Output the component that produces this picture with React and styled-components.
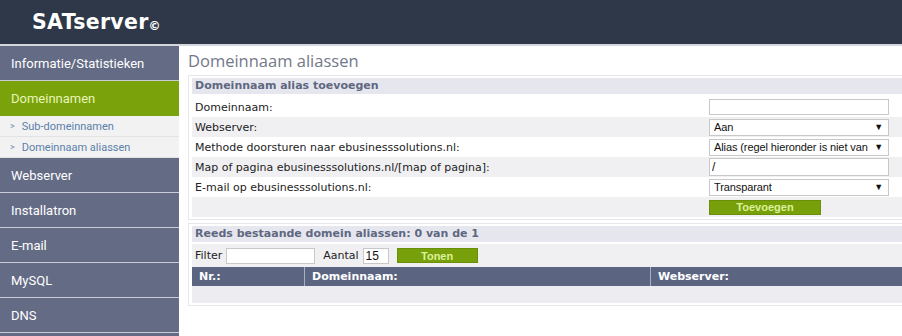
import React from 'react';
import styled, { createGlobalStyle } from 'styled-components';

const GlobalStyle = createGlobalStyle`
  html, body {
    margin: 0;
    padding: 0;
    background: #fff;
    overflow: hidden;
  }
  * { box-sizing: border-box; }
`;

const Page = styled.div`
  width: 902px;
  height: 336px;
  overflow: hidden;
`;

const TopBar = styled.div`
  height: 46px;
  background: #2e3848;
  border-bottom: 2px solid #d4d7dc;
  display: flex;
  align-items: center;
  padding-left: 32px;
`;

const Logo = styled.div`
  font-family: "DejaVu Sans", Verdana, sans-serif;
  font-weight: 700;
  font-size: 20.5px;
  letter-spacing: 0.3px;
  color: #fff;
  sup {
    font-size: 12px;
    font-weight: 700;
    vertical-align: -1px;
    margin-left: 0;
  }
`;

const Body = styled.div`
  display: flex;
`;

const Sidebar = styled.div`
  width: 179px;
  flex-shrink: 0;
  font-family: Roboto, "Open Sans", sans-serif;
`;

const NavItem = styled.div`
  height: 35px;
  padding-left: 11px;
  display: flex;
  align-items: center;
  font-size: 13px;
  color: ${(p) => (p.$active ? '#e8f5b8' : '#fff')};
  background: ${(p) => (p.$active ? '#7aa20a' : '#646b85')};
  border-bottom: 1px solid ${(p) => (p.$active ? '#7aa20a' : '#c9ccd6')};
`;

const SubItem = styled.div`
  height: 21px;
  padding-left: 10px;
  display: flex;
  align-items: center;
  gap: 7px;
  font-size: 11px;
  color: #5a80aa;
  background: #f2f2f2;
  border-bottom: 1px solid #e2e2e2;
  span { font-size: 9px; color: #7a8fb0; }
`;

const Main = styled.div`
  margin-left: 9px;
  padding-top: 5px;
  width: 730px;
  flex-shrink: 0;
  font-family: "DejaVu Sans", Verdana, sans-serif;
  font-size: 11px;
  color: #222;
`;

const Title = styled.div`
  font-family: "Open Sans", sans-serif;
  font-size: 16.5px;
  color: #737888;
  height: 22px;
  line-height: 20px;
  margin-bottom: 2px;
`;

const Box = styled.div`
  border: 1px solid #e6e6eb;
  padding: 2px 3px;
  margin-bottom: 3px;
`;

const BoxHeader = styled.div`
  background: #e6e7ee;
  color: #5f6781;
  font-weight: 700;
  height: 16px;
  line-height: 16px;
  padding-left: 3px;
  margin-bottom: ${(p) => p.$gap || 2}px;
`;

const FormRow = styled.div`
  display: grid;
  grid-template-columns: 517px 1fr;
  align-items: center;
  height: 20px;
  background: ${(p) => (p.$shade ? '#f0f0f3' : '#fff')};
`;

const Label = styled.div`
  padding-left: 3px;
`;

const TextInput = styled.input`
  width: ${(p) => p.$w || 180}px;
  height: ${(p) => p.$h || 16}px;
  margin-left: ${(p) => p.$ml || 0}px;
  border: 1px solid #c8c8c8;
  padding: 0 2px;
  font-family: "Liberation Sans", Arial, sans-serif;
  font-size: 12px;
  color: #111;
  background: #fff;
  outline: none;
`;

const FakeSelect = styled.div`
  width: 180px;
  height: 17px;
  border: 1px solid #c8c8c8;
  background: #fff;
  display: flex;
  align-items: center;
  padding: 0 5px 0 4px;
  font-family: "Liberation Sans", Arial, sans-serif;
  font-size: 11px;
  letter-spacing: -0.1px;
  color: #111;
  white-space: nowrap;
  span {
    flex: 1;
    overflow: hidden;
  }
  b {
    font-size: 9px;
    color: #111;
    margin-left: 4px;
  }
`;

const GreenButton = styled.div`
  width: ${(p) => p.$w}px;
  height: 15px;
  margin-left: ${(p) => p.$ml || 0}px;
  background: #78a00a;
  border: 1px solid #6c8f0a;
  color: #dcf19a;
  font-family: "Liberation Sans", Arial, sans-serif;
  font-weight: 700;
  font-size: 11px;
  display: flex;
  align-items: center;
  justify-content: center;
`;

const FilterRow = styled.div`
  display: flex;
  align-items: center;
  height: 23px;
  padding-left: 3px;
  gap: 4px;
  background: #f0f0f3;
`;

const FilterLabel = styled.span`
  margin-left: ${(p) => p.$ml || 0}px;
`;

const TableHead = styled.div`
  display: grid;
  grid-template-columns: 112px 346px 1fr;
  height: 19px;
  background: #5b6582;
  color: #fff;
  font-weight: 700;
`;

const HeadCell = styled.div`
  display: flex;
  align-items: center;
  padding-left: 7px;
  border-left: ${(p) => (p.$first ? 'none' : '1px solid #a9aec0')};
`;

const EmptyRow = styled.div`
  height: 17px;
  background: #ececf1;
`;

export default function App() {
  return (
    <Page>
      <GlobalStyle />
      <TopBar>
        <Logo>SATserver<sup>©</sup></Logo>
      </TopBar>
      <Body>
        <Sidebar>
          <NavItem>Informatie/Statistieken</NavItem>
          <NavItem $active>Domeinnamen</NavItem>
          <SubItem><span>&gt;</span>Sub-domeinnamen</SubItem>
          <SubItem><span>&gt;</span>Domeinnaam aliassen</SubItem>
          <NavItem>Webserver</NavItem>
          <NavItem>Installatron</NavItem>
          <NavItem>E-mail</NavItem>
          <NavItem>MySQL</NavItem>
          <NavItem>DNS</NavItem>
          <NavItem />
        </Sidebar>
        <Main>
          <Title>Domeinnaam aliassen</Title>
          <Box>
            <BoxHeader $gap={3}>Domeinnaam alias toevoegen</BoxHeader>
            <FormRow>
              <Label>Domeinnaam:</Label>
              <TextInput defaultValue="" />
            </FormRow>
            <FormRow $shade>
              <Label>Webserver:</Label>
              <FakeSelect><span>Aan</span><b>▼</b></FakeSelect>
            </FormRow>
            <FormRow>
              <Label>Methode doorsturen naar ebusinesssolutions.nl:</Label>
              <FakeSelect><span>Alias (regel hieronder is niet van</span><b>▼</b></FakeSelect>
            </FormRow>
            <FormRow $shade>
              <Label>Map of pagina ebusinesssolutions.nl/[map of pagina]:</Label>
              <TextInput defaultValue="/" $h={18} />
            </FormRow>
            <FormRow>
              <Label>E-mail op ebusinesssolutions.nl:</Label>
              <FakeSelect><span>Transparant</span><b>▼</b></FakeSelect>
            </FormRow>
            <FormRow $shade>
              <Label />
              <GreenButton $w={112}>Toevoegen</GreenButton>
            </FormRow>
          </Box>
          <Box>
            <BoxHeader>Reeds bestaande domein aliassen: 0 van de 1</BoxHeader>
            <FilterRow>
              <FilterLabel>Filter</FilterLabel>
              <TextInput $w={89} $h={16} defaultValue="" />
              <FilterLabel $ml={4}>Aantal</FilterLabel>
              <TextInput $w={26} $h={16} defaultValue="15" />
              <GreenButton $w={81} $ml={4}>Tonen</GreenButton>
            </FilterRow>
            <TableHead>
              <HeadCell $first>Nr.:</HeadCell>
              <HeadCell>Domeinnaam:</HeadCell>
              <HeadCell>Webserver:</HeadCell>
            </TableHead>
            <EmptyRow />
          </Box>
        </Main>
      </Body>
    </Page>
  );
}
